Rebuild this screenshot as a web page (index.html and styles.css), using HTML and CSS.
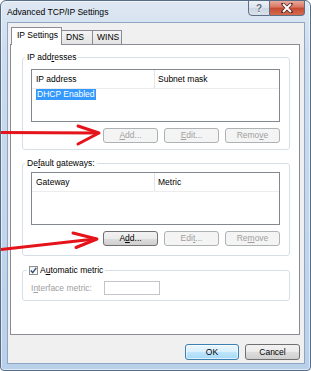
FILE: index.html
```html
<!DOCTYPE html>
<html>
<head>
<meta charset="utf-8">
<link rel="stylesheet" href="styles.css">
</head>
<body>
<div class="window">
  <div class="titlebar">
    <span class="title">Advanced TCP/IP Settings</span>
    <div class="caption">
      <div class="cap help">?</div>
      <div class="cap close">
        <svg width="12" height="10" viewBox="0 0 12 10"><path d="M2 1 L10 9 M10 1 L2 9" stroke="#4a2020" stroke-width="3.4" stroke-linecap="round"/><path d="M2 1 L10 9 M10 1 L2 9" stroke="#fff" stroke-width="2"/></svg>
      </div>
    </div>
  </div>
  <div class="client">
    <div class="tabs">
      <div class="tab active">IP Settings</div>
      <div class="tab tab-dns">DNS</div>
      <div class="tab tab-wins">WINS</div>
    </div>
    <div class="panel">
      <fieldset class="group g1">
        <legend>IP add<u>r</u>esses</legend>
        <div class="listview">
          <div class="lv-header">
            <div class="lv-col1">IP address</div>
            <div class="lv-col2">Subnet mask</div>
          </div>
          <div class="lv-row"><span class="sel">DHCP Enabled</span></div>
        </div>
        <div class="btn-row">
          <div class="btn disabled"><u>A</u>dd...</div>
          <div class="btn disabled"><u>E</u>dit...</div>
          <div class="btn disabled">Remo<u>v</u>e</div>
        </div>
      </fieldset>
      <fieldset class="group g2">
        <legend>De<u>f</u>ault gateways:</legend>
        <div class="listview">
          <div class="lv-header">
            <div class="lv-col1">Gateway</div>
            <div class="lv-col2">Metric</div>
          </div>
        </div>
        <div class="btn-row">
          <div class="btn">A<u>d</u>d...</div>
          <div class="btn disabled">Edi<u>t</u>...</div>
          <div class="btn disabled">Re<u>m</u>ove</div>
        </div>
      </fieldset>
      <fieldset class="group g3">
        <legend class="check-legend">
          <span class="checkbox"><svg width="7" height="7" viewBox="0 0 7 7"><path d="M0.8 3.6 L2.7 5.6 L6.3 0.9" fill="none" stroke="#3b4f80" stroke-width="1.5"/></svg></span>
          <span>A<u>u</u>tomatic metric</span>
        </legend>
        <div class="metric-row">
          <span class="metric-label">I<u>n</u>terface metric:</span>
          <div class="textbox"></div>
        </div>
      </fieldset>
    </div>
    <div class="dialog-buttons">
      <div class="btn default">OK</div>
      <div class="btn cancel">Cancel</div>
    </div>
  </div>
  <svg class="arrows" width="311" height="371" viewBox="0 0 311 371">
    <g fill="none" stroke="#e5141b" stroke-width="3" stroke-linecap="round" stroke-linejoin="round">
      <path d="M0 132.5 L97 133"/>
      <path d="M78 126 L99 133 L78 144"/>
      <path d="M0 249.5 L95 239"/>
      <path d="M73 233 L97 239 L76 247.5"/>
    </g>
  </svg>
</div>
</body>
</html>
```

FILE: styles.css
```css
* {
  box-sizing: border-box;
}

body {
  margin: 0;
  font-family: "Liberation Sans", Arial, sans-serif;
  font-size: 8.5px;
  color: #000;
}

u {
  text-decoration: underline;
  text-underline-offset: 1px;
}

.window {
  position: relative;
  width: 311px;
  height: 371px;
  border: 1px solid #566d88;
  border-radius: 6px 6px 4px 4px;
  background: linear-gradient(#dfe8f3 0, #cddcee 50px, #b9d0ea 100%);
  box-shadow: inset 0 0 0 1px rgba(255, 255, 255, 0.55);
  padding: 0 5px 6px 6px;
  display: flex;
  flex-direction: column;
  overflow: hidden;
}

.titlebar {
  height: 21px;
  display: flex;
  align-items: flex-start;
  margin: 0 -5px 0 -6px;
  padding-left: 6px;
}

.title {
  line-height: 20px;
  padding-top: 1px;
  font-size: 8.6px;
}

.caption {
  margin-left: auto;
  margin-right: 5px;
  margin-top: -1px;
  display: flex;
}

.cap {
  height: 16px;
  border: 1px solid #5f6f86;
  display: flex;
  align-items: center;
  justify-content: center;
}

.help {
  width: 22px;
  border-radius: 0 0 0 4px;
  background: linear-gradient(#eef2f7 0, #dbe3ec 50%, #ccd6e2 51%, #d8e1ea 100%);
  color: #5a6b84;
  font-size: 10px;
  font-weight: bold;
  text-shadow: 0 1px 0 #fff;
}

.close {
  width: 35px;
  border-left: none;
  border-radius: 0 0 4px 0;
  background: linear-gradient(#e9a99b 0, #d9735f 45%, #c44a30 50%, #d46b4d 100%);
}

.client {
  flex: 1;
  background: #f0f0f0;
  border: 1px solid #8ea6c2;
  padding: 4px 4px 3px 2px;
  display: flex;
  flex-direction: column;
}

.tabs {
  display: flex;
  align-items: flex-end;
  height: 17px;
  padding-left: 1px;
  position: relative;
  z-index: 1;
}

.tab {
  height: 14px;
  border: 1px solid #898c95;
  border-bottom: none;
  background: linear-gradient(#f4f4f4, #e3e3e3);
  padding-left: 4px;
  line-height: 12px;
  margin-left: -1px;
  white-space: nowrap;
}

.tab.active {
  width: 51px;
  height: 18px;
  margin-left: 0;
  margin-bottom: -1px;
  background: #fff;
  padding-left: 5px;
  padding-top: 2px;
  line-height: 11px;
  position: relative;
  z-index: 2;
}

.tab-dns {
  width: 32px;
}

.tab-wins {
  width: 30px;
}

.panel {
  height: 291px;
  border: 1px solid #898c95;
  background: #fff;
  padding: 6px 9px 0 11px;
}

.group {
  margin: 0;
  border: 1px solid #d5dfe5;
  border-radius: 3px;
  padding: 6px 9px 6px 8px;
  min-width: 0;
}

.group legend {
  padding: 0 2px;
  margin-left: -6px;
  line-height: 12px;
  height: 12px;
  white-space: nowrap;
}

.g2 {
  margin-top: 7px;
  padding-top: 3px;
  padding-bottom: 9px;
}

.g3 {
  margin-top: 8px;
  padding-top: 5px;
  padding-bottom: 5px;
}

.g3 .check-legend {
  margin-left: -4px;
  display: flex;
  align-items: center;
  gap: 2px;
}

.checkbox {
  width: 9px;
  height: 9px;
  border: 1px solid #8e8f8f;
  background: linear-gradient(#f2f2f2, #fff);
  display: flex;
  align-items: center;
  justify-content: center;
}

.listview {
  height: 53px;
  border: 1px solid #828790;
  background: #fff;
}

.lv-header {
  display: flex;
  height: 19px;
  line-height: 18px;
  border-bottom: 1px solid #ececec;
}

.lv-col1 {
  width: 123px;
  padding-left: 4px;
  border-right: 1px solid #e5e5e5;
}

.lv-col2 {
  padding-left: 3px;
}

.lv-row {
  padding-left: 4px;
  height: 12px;
}

.sel {
  display: inline-block;
  background: #3399ff;
  color: #fff;
  line-height: 11px;
  padding: 0 1px;
}

.btn-row {
  display: flex;
  justify-content: flex-end;
  gap: 6px;
  margin-top: 6px;
}

.btn {
  width: 55px;
  height: 15px;
  border: 1px solid #707070;
  border-radius: 3px;
  background: linear-gradient(#f2f2f2 0, #ebebeb 50%, #dddddd 51%, #cfcfcf 100%);
  line-height: 13px;
  text-align: center;
  color: #000;
  white-space: nowrap;
}

.btn.disabled {
  border-color: #adb2b5;
  background: #f4f4f4;
  color: #a0a0a0;
}

.metric-row {
  display: flex;
  align-items: center;
}

.metric-label {
  width: 73px;
  color: #a0a0a0;
}

.textbox {
  width: 56px;
  height: 14px;
  border: 1px solid #c3c5ca;
  background: #fff;
}

.dialog-buttons {
  display: flex;
  justify-content: flex-end;
  gap: 6px;
  margin-top: 9px;
}

.dialog-buttons .btn {
  height: 16px;
  line-height: 14px;
}

.btn.default {
  width: 54px;
  border-color: #3c7fb1;
  background: linear-gradient(#eaf6fd 0, #d9f0fc 50%, #bee6fd 51%, #a7d9f5 100%);
  box-shadow: inset 0 0 0 1px rgba(255, 255, 255, 0.6);
}

.btn.cancel {
  width: 55px;
}

.arrows {
  position: absolute;
  left: -1px;
  top: -1px;
  pointer-events: none;
}
```
